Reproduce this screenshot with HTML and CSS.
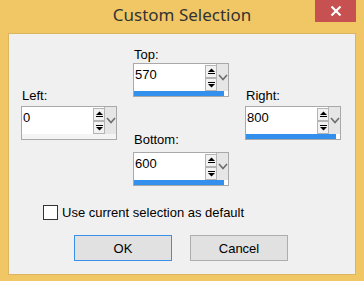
FILE: index.html
```html
<!DOCTYPE html>
<html lang="en">
<head>
    <meta charset="UTF-8">
    <title>Custom Selection</title>
    <link rel="stylesheet" href="styles.css">
</head>
<body>

<div class="window">
    <div class="titlebar">
        <span class="title">Custom Selection</span>
        <button class="close" type="button" aria-label="Close">
            <svg width="12" height="12" viewBox="0 0 12 12"><path d="M1.5 1.5 L10.5 10.5 M10.5 1.5 L1.5 10.5" stroke="#fff" stroke-width="2.2"/></svg>
        </button>
    </div>

    <div class="client">
        <div class="fields">
            <div class="col col-side">
                <label class="lbl lbl-side">Left:</label>
                <div class="spin">
                    <div class="spin-main">
                        <span class="spin-value">0</span>
                        <div class="spin-btns">
                            <span class="sbtn"><svg width="9" height="9" viewBox="0 0 9 9"><path d="M1 5 L4.5 1.5 L8 5 Z" fill="#000"/><rect x="1" y="6" width="7" height="1" fill="#000"/></svg></span>
                            <span class="sbtn"><svg width="9" height="9" viewBox="0 0 9 9"><rect x="1" y="2" width="7" height="1" fill="#000"/><path d="M1 4 L8 4 L4.5 7.5 Z" fill="#000"/></svg></span>
                        </div>
                        <span class="spin-drop"><svg width="10" height="7" viewBox="0 0 10 7"><path d="M1 1 L5 5.5 L9 1" fill="none" stroke="#6d6d6d" stroke-width="1.6"/></svg></span>
                    </div>
                    <div class="spin-bar"></div>
                </div>
            </div>

            <div class="col col-mid">
                <label class="lbl lbl-top">Top:</label>
                <div class="spin">
                    <div class="spin-main">
                        <span class="spin-value">570</span>
                        <div class="spin-btns">
                            <span class="sbtn"><svg width="9" height="9" viewBox="0 0 9 9"><path d="M1 5 L4.5 1.5 L8 5 Z" fill="#000"/><rect x="1" y="6" width="7" height="1" fill="#000"/></svg></span>
                            <span class="sbtn"><svg width="9" height="9" viewBox="0 0 9 9"><rect x="1" y="2" width="7" height="1" fill="#000"/><path d="M1 4 L8 4 L4.5 7.5 Z" fill="#000"/></svg></span>
                        </div>
                        <span class="spin-drop"><svg width="10" height="7" viewBox="0 0 10 7"><path d="M1 1 L5 5.5 L9 1" fill="none" stroke="#6d6d6d" stroke-width="1.6"/></svg></span>
                    </div>
                    <div class="spin-bar active"></div>
                </div>

                <label class="lbl lbl-bottom">Bottom:</label>
                <div class="spin">
                    <div class="spin-main">
                        <span class="spin-value">600</span>
                        <div class="spin-btns">
                            <span class="sbtn"><svg width="9" height="9" viewBox="0 0 9 9"><path d="M1 5 L4.5 1.5 L8 5 Z" fill="#000"/><rect x="1" y="6" width="7" height="1" fill="#000"/></svg></span>
                            <span class="sbtn"><svg width="9" height="9" viewBox="0 0 9 9"><rect x="1" y="2" width="7" height="1" fill="#000"/><path d="M1 4 L8 4 L4.5 7.5 Z" fill="#000"/></svg></span>
                        </div>
                        <span class="spin-drop"><svg width="10" height="7" viewBox="0 0 10 7"><path d="M1 1 L5 5.5 L9 1" fill="none" stroke="#6d6d6d" stroke-width="1.6"/></svg></span>
                    </div>
                    <div class="spin-bar active"></div>
                </div>
            </div>

            <div class="col col-side">
                <label class="lbl lbl-side">Right:</label>
                <div class="spin">
                    <div class="spin-main">
                        <span class="spin-value">800</span>
                        <div class="spin-btns">
                            <span class="sbtn"><svg width="9" height="9" viewBox="0 0 9 9"><path d="M1 5 L4.5 1.5 L8 5 Z" fill="#000"/><rect x="1" y="6" width="7" height="1" fill="#000"/></svg></span>
                            <span class="sbtn"><svg width="9" height="9" viewBox="0 0 9 9"><rect x="1" y="2" width="7" height="1" fill="#000"/><path d="M1 4 L8 4 L4.5 7.5 Z" fill="#000"/></svg></span>
                        </div>
                        <span class="spin-drop"><svg width="10" height="7" viewBox="0 0 10 7"><path d="M1 1 L5 5.5 L9 1" fill="none" stroke="#6d6d6d" stroke-width="1.6"/></svg></span>
                    </div>
                    <div class="spin-bar active"></div>
                </div>
            </div>
        </div>

        <label class="check-row">
            <span class="checkbox"></span>
            <span>Use current selection as default</span>
        </label>

        <div class="buttons">
            <button type="button" class="btn btn-default">OK</button>
            <button type="button" class="btn">Cancel</button>
        </div>
    </div>
</div>

</body>
</html>
```

FILE: styles.css
```css
/* Custom Selection dialog */
body {
    margin: 0;
    padding: 0;
    font-family: "Liberation Sans", Arial, sans-serif;
    font-size: 13px;
    color: #000;
    background-color: #f1c766;
}
.window {
    width: 364px;
    height: 281px;
    background-color: #f1c766;
}
.titlebar {
    position: relative;
    height: 33px;
    text-align: center;
}
.title {
    display: inline-block;
    font-family: "Noto Sans", sans-serif;
    font-size: 17px;
    line-height: 30px;
    color: #333;
}
.close {
    position: absolute;
    top: 0;
    right: 8px;
    width: 41px;
    height: 22px;
    border: none;
    padding: 0;
    background-color: #c75050;
    display: flex;
    align-items: center;
    justify-content: center;
}
.client {
    margin: 0 8px;
    height: 240px;
    background-color: #f0f0f0;
    border: 1px solid #dbb560;
}
.fields {
    display: flex;
    gap: 16px;
    padding-left: 12px;
}
.col {
    width: 96px;
    display: flex;
    flex-direction: column;
}
.col-side {
    padding-top: 54px;
}
.col-mid {
    padding-top: 13px;
}
.lbl {
    display: block;
    line-height: 15px;
    padding-left: 1px;
}
.lbl-side {
    margin-bottom: 3px;
}
.lbl-top {
    margin-bottom: 1px;
}
.lbl-bottom {
    margin-top: 35px;
    margin-bottom: 5px;
}
.spin {
    height: 32px;
    border: 1px solid #a9a9a9;
    background-color: #fff;
    display: flex;
    flex-direction: column;
}
.spin-main {
    display: flex;
    height: 27px;
}
.spin-value {
    flex: 1;
    padding: 3px 0 0 1px;
    line-height: 15px;
}
.spin-btns {
    width: 11px;
    padding-top: 1px;
    display: flex;
    flex-direction: column;
}
.sbtn {
    height: 11px;
    border: 1px solid #b4b4b4;
    border-right: none;
    background-color: #f2f2f2;
    display: flex;
    align-items: center;
    justify-content: center;
}
.sbtn + .sbtn {
    height: 12px;
}
.spin-drop {
    width: 11px;
    background-color: #e6e6e6;
    border-left: 1px solid #b4b4b4;
    display: flex;
    align-items: center;
    justify-content: center;
}
.spin-bar {
    height: 5px;
    background-color: #f4f4f4;
}
.spin-bar.active {
    background-color: #3390ec;
    margin-right: 4px;
}
.check-row {
    display: flex;
    align-items: center;
    margin-top: 19px;
    padding-left: 34px;
    line-height: 15px;
}
.checkbox {
    width: 13px;
    height: 13px;
    border: 1px solid #333;
    background-color: #fff;
    margin-right: 4px;
}
.buttons {
    display: flex;
    gap: 18px;
    margin-top: 15px;
    padding-left: 65px;
}
.btn {
    width: 98px;
    height: 26px;
    font-family: "Liberation Sans", Arial, sans-serif;
    font-size: 13px;
    color: #000;
    background-color: #e1e1e1;
    border: 1px solid #adadad;
    padding: 0;
}
.btn-default {
    border-color: #3c8fe6;
}
```
